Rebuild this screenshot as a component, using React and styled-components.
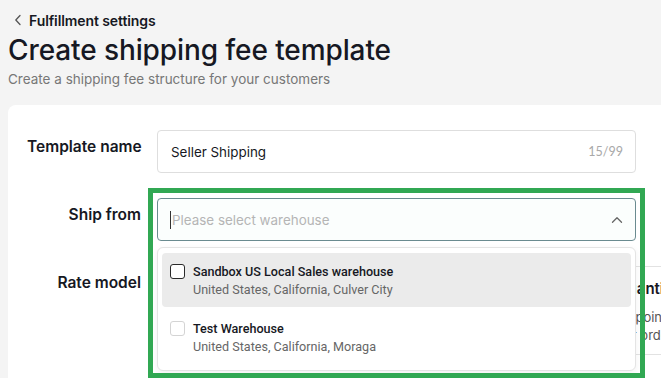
import React from "react";
import styled, { createGlobalStyle } from "styled-components";

const GlobalStyle = createGlobalStyle`
  html, body { margin: 0; padding: 0; }
  body {
    background: #f4f4f4;
    font-family: Inter, "Noto Sans", sans-serif;
    color: #161823;
    overflow: hidden;
  }
`;

const Page = styled.div`
  padding: 10px 0 0 8px;
  width: 661px;
  height: 378px;
  box-sizing: border-box;
  overflow: hidden;
`;

const BackLink = styled.div`
  display: flex;
  align-items: center;
  gap: 7px;
  padding-left: 6px;
  height: 20px;
  font-size: 14px;
  font-weight: 600;
  letter-spacing: -0.1px;
`;

const Title = styled.h1`
  margin: 3px 0 0;
  font-size: 28px;
  line-height: 34px;
  font-weight: 500;
  letter-spacing: -0.1px;
`;

const Subtitle = styled.div`
  margin-top: 2px;
  font-size: 13.5px;
  line-height: 20px;
  color: #777;
`;

const Card = styled.div`
  margin-top: 16px;
  margin-right: -40px;
  background: #fff;
  border-radius: 8px 0 0 0;
  padding: 25px 0 30px 19px;
`;

const Row = styled.div`
  display: grid;
  grid-template-columns: 114px 479px;
  column-gap: 16px;
  align-items: start;
  margin-bottom: 25px;
`;

const Label = styled.div`
  text-align: right;
  font-size: 15.5px;
  font-weight: 600;
  line-height: 20px;
  padding-top: 7px;
  color: #161823;
  white-space: nowrap;
`;

const Field = styled.div`
  height: 43px;
  box-sizing: border-box;
  border: 1px solid ${(p) => (p.$focus ? "#6a8b90" : "#dedede")};
  border-radius: 4px;
  background: ${(p) => (p.$focus ? "#fbfefd" : "#fff")};
  display: flex;
  align-items: center;
  padding: 0 12px 0 13px;
  font-size: 13.4px;
`;

const Value = styled.span`
  flex: 1;
  color: #161823;
`;

const Counter = styled.span`
  font-size: 12.5px;
  color: #a8a8a8;
  font-family: Lato, sans-serif;
`;

const Caret = styled.span`
  width: 1px;
  height: 18px;
  background: #333;
  margin-left: -1px;
  margin-right: 1px;
`;

const Placeholder = styled.span`
  flex: 1;
  color: #b5b5b5;
`;

const SelectWrap = styled.div`
  position: relative;
`;

const Panel = styled.div`
  position: absolute;
  top: calc(100% + 6px);
  left: 0;
  right: 0;
  z-index: 5;
  background: #fff;
  border: 1px solid #e4e4e4;
  border-radius: 6px;
  box-shadow: 0 2px 6px rgba(0, 0, 0, 0.06);
  padding: 5px 4px 6px;
  display: flex;
  flex-direction: column;
  gap: 3px;
  font-family: Roboto, "Noto Sans", sans-serif;
`;

const Option = styled.div`
  display: flex;
  align-items: flex-start;
  gap: 8px;
  padding: 10px 8px 8px;
  border-radius: 4px;
  background: ${(p) => (p.$hover ? "#ebebeb" : "transparent")};
`;

const Check = styled.span`
  flex: none;
  width: 15px;
  height: 15px;
  box-sizing: border-box;
  margin-top: 1px;
  border-radius: 3px;
  border: 1.5px solid ${(p) => (p.$hover ? "#2a2a2a" : "#d4d4d4")};
  background: #fff;
`;

const OptText = styled.div`
  display: flex;
  flex-direction: column;
`;

const OptTitle = styled.span`
  font-size: 12.6px;
  font-weight: 500;
  line-height: 18px;
  color: #161823;
`;

const OptSub = styled.span`
  font-size: 12.6px;
  line-height: 18px;
  color: #666;
`;

const Annotation = styled.div`
  position: absolute;
  top: -10px;
  left: -9px;
  right: -9px;
  height: 190px;
  border: 5px solid #31a853;
  box-sizing: border-box;
  z-index: 6;
  pointer-events: none;
`;

const RateCards = styled.div`
  display: flex;
  gap: 12px;
  width: 720px;
`;

const RateCard = styled.div`
  flex: none;
  width: 211px;
  height: 89px;
  box-sizing: border-box;
  border: 1px solid #e2e2e2;
  border-radius: 6px;
  padding: 12px 12px;
`;

const RateTitle = styled.div`
  font-size: 15px;
  font-weight: 600;
  line-height: 20px;
  white-space: nowrap;
`;

const RateDesc = styled.div`
  margin-top: 9px;
  display: flex;
  flex-direction: column;
  font-size: 13px;
  line-height: 18px;
  color: #555;
  white-space: nowrap;
`;

const ChevronLeft = () => (
  <svg width="8" height="12" viewBox="0 0 8 12" fill="none">
    <path d="M6 1.5L1.8 6 6 10.5" stroke="#555" strokeWidth="1.3" strokeLinecap="round" strokeLinejoin="round" />
  </svg>
);

const ChevronUp = () => (
  <svg width="12" height="8" viewBox="0 0 12 8" fill="none">
    <path d="M1.5 6.2L6 1.8l4.5 4.4" stroke="#666" strokeWidth="1.3" strokeLinecap="round" strokeLinejoin="round" />
  </svg>
);

const rates = [
  { t: "Flat rate", d: ["Charge a fixed fee", "for every order"] },
  { t: "Weight-based", d: ["Fee based on the", "total order weight"] },
  { t: "Quantity-based", d: ["By points per item", "Per order quantity"] },
];

export default function App() {
  return (
    <>
      <GlobalStyle />
      <Page>
        <BackLink>
          <ChevronLeft />
          <span>Fulfillment settings</span>
        </BackLink>
        <Title>Create shipping fee template</Title>
        <Subtitle>Create a shipping fee structure for your customers</Subtitle>
        <Card>
          <Row>
            <Label>Template name</Label>
            <Field>
              <Value>Seller Shipping</Value>
              <Counter>15/99</Counter>
            </Field>
          </Row>
          <Row>
            <Label>Ship from</Label>
            <SelectWrap>
              <Field $focus>
                <Caret />
                <Placeholder>Please select warehouse</Placeholder>
                <ChevronUp />
              </Field>
              <Panel>
                <Option $hover>
                  <Check $hover />
                  <OptText>
                    <OptTitle>Sandbox US Local Sales warehouse</OptTitle>
                    <OptSub>United States, California, Culver City</OptSub>
                  </OptText>
                </Option>
                <Option>
                  <Check />
                  <OptText>
                    <OptTitle>Test Warehouse</OptTitle>
                    <OptSub>United States, California, Moraga</OptSub>
                  </OptText>
                </Option>
              </Panel>
              <Annotation />
            </SelectWrap>
          </Row>
          <Row>
            <Label>Rate model</Label>
            <RateCards>
              {rates.map((r) => (
                <RateCard key={r.t}>
                  <RateTitle>{r.t}</RateTitle>
                  <RateDesc>
                    {r.d.map((line) => (
                      <span key={line}>{line}</span>
                    ))}
                  </RateDesc>
                </RateCard>
              ))}
            </RateCards>
          </Row>
        </Card>
      </Page>
    </>
  );
}
